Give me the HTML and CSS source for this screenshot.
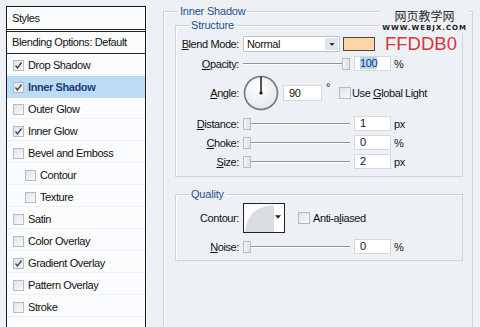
FILE: index.html
```html
<!DOCTYPE html>
<html lang="en">
<head>
    <meta charset="UTF-8">
    <title>Layer Style - Inner Shadow</title>
    <link rel="stylesheet" href="styles.css">
</head>
<body>
    <div class="dialog">
        <!-- left list of effects -->
        <aside class="styles-panel">
            <div class="panel-head">Styles</div>
            <div class="blend-opts">Blending Options: Default</div>
            <ul class="effect-list">
                <li class="effect"><span class="check on"><svg viewBox="0 0 9 9"><path d="M1.5 4.5 L3.5 7 L7.5 1.5"/></svg></span>Drop Shadow</li>
                <li class="effect active"><span class="check on"><svg viewBox="0 0 9 9"><path d="M1.5 4.5 L3.5 7 L7.5 1.5"/></svg></span>Inner Shadow</li>
                <li class="effect"><span class="check"></span>Outer Glow</li>
                <li class="effect"><span class="check on"><svg viewBox="0 0 9 9"><path d="M1.5 4.5 L3.5 7 L7.5 1.5"/></svg></span>Inner Glow</li>
                <li class="effect"><span class="check"></span>Bevel and Emboss</li>
                <li class="effect sub"><span class="check"></span>Contour</li>
                <li class="effect sub"><span class="check"></span>Texture</li>
                <li class="effect"><span class="check"></span>Satin</li>
                <li class="effect"><span class="check"></span>Color Overlay</li>
                <li class="effect"><span class="check on"><svg viewBox="0 0 9 9"><path d="M1.5 4.5 L3.5 7 L7.5 1.5"/></svg></span>Gradient Overlay</li>
                <li class="effect"><span class="check"></span>Pattern Overlay</li>
                <li class="effect"><span class="check"></span>Stroke</li>
            </ul>
        </aside>

        <!-- settings for the selected effect -->
        <main class="options">
            <fieldset class="box box-outer">
                <legend>Inner Shadow</legend>

                <fieldset class="box box-inner structure">
                    <legend>Structure</legend>

                    <div class="row row-blend">
                        <label class="lbl"><u>B</u>lend Mode:</label>
                        <div class="select">
                            <span class="select-text">Normal</span>
                            <span class="select-btn"><svg viewBox="0 0 7 4"><path d="M0 0 H7 L3.5 4 Z"/></svg></span>
                        </div>
                        <span class="swatch"></span>
                        <span class="hex-note">FFDDB0</span>
                    </div>

                    <div class="row">
                        <label class="lbl"><u>O</u>pacity:</label>
                        <div class="slider at-end"><span class="thumb"></span></div>
                        <span class="field"><span class="selected">100</span></span>
                        <span class="unit">%</span>
                    </div>

                    <div class="row row-angle">
                        <label class="lbl"><u>A</u>ngle:</label>
                        <svg class="dial" viewBox="0 0 36 36">
                            <defs>
                                <radialGradient id="dialFill" cx="0.4" cy="0.35" r="0.7">
                                    <stop offset="0" stop-color="#ffffff"/>
                                    <stop offset="1" stop-color="#e2e7ec"/>
                                </radialGradient>
                            </defs>
                            <circle cx="18" cy="18" r="16.5" fill="url(#dialFill)" stroke="#6f7882" stroke-width="1.6"/>
                            <line x1="18" y1="18" x2="18" y2="1.5" stroke="#111" stroke-width="1.4"/>
                            <circle cx="18" cy="18" r="1.6" fill="#111"/>
                        </svg>
                        <span class="field field-angle">90</span>
                        <span class="degree">°</span>
                        <span class="check check-light"></span>
                        <span class="opt-text">Use <u>G</u>lobal Light</span>
                    </div>

                    <div class="row row-num">
                        <label class="lbl"><u>D</u>istance:</label>
                        <div class="slider"><span class="thumb"></span></div>
                        <span class="field">1</span>
                        <span class="unit">px</span>
                    </div>

                    <div class="row row-num">
                        <label class="lbl"><u>C</u>hoke:</label>
                        <div class="slider"><span class="thumb"></span></div>
                        <span class="field">0</span>
                        <span class="unit">%</span>
                    </div>

                    <div class="row row-num">
                        <label class="lbl"><u>S</u>ize:</label>
                        <div class="slider"><span class="thumb"></span></div>
                        <span class="field">2</span>
                        <span class="unit">px</span>
                    </div>
                </fieldset>

                <fieldset class="box box-inner quality">
                    <legend>Quality</legend>

                    <div class="row row-contour">
                        <label class="lbl">Contour:</label>
                        <div class="contour">
                            <svg viewBox="0 0 40 28"><path d="M1 28 Q3 3 30 1 L30 28 Z" fill="#d9dde2"/></svg>
                            <svg class="contour-arrow" viewBox="0 0 7 4"><path d="M0 0 H7 L3.5 4 Z"/></svg>
                        </div>
                        <span class="check check-aa"></span>
                        <span class="opt-text">Anti-a<u>l</u>iased</span>
                    </div>

                    <div class="row row-noise">
                        <label class="lbl"><u>N</u>oise:</label>
                        <div class="slider"><span class="thumb"></span></div>
                        <span class="field">0</span>
                        <span class="unit">%</span>
                    </div>
                </fieldset>
            </fieldset>

            <!-- site watermark stamped over the screenshot -->
            <div class="watermark">
                <div class="wm-title">网页教学网</div>
                <div class="wm-url">WWW.WEBJX.COM</div>
            </div>
        </main>
    </div>
</body>
</html>
```

FILE: styles.css
```css
body {
    margin: 0;
    height: 327px;
    overflow: hidden;
    background: #edf1f5;
    font-family: "Liberation Sans", Arial, sans-serif;
    font-size: 11px;
    letter-spacing: -0.4px;
    color: #111;
}

.dialog {
    display: flex;
    height: 100%;
}

/* Styles list on the left */
.styles-panel {
    flex-shrink: 0;
    width: 138px;
    margin: 6px 0 0 6px;
    border: 1px solid #1b1b1b;
    border-bottom: none;
    background: #fafcfd;
}

.panel-head {
    height: 22px;
    line-height: 22px;
    padding-left: 5px;
    border-bottom: 3px double #222;
}

.blend-opts {
    height: 21px;
    line-height: 21px;
    padding-left: 5px;
    border-bottom: 1px solid #222;
}

.effect-list {
    list-style: none;
    margin: 0;
    padding: 0;
}

.effect {
    display: flex;
    align-items: center;
    height: 22px;
    padding-left: 6px;
    background: linear-gradient(to bottom, transparent 20px, #edf1f5 20px, #edf1f5 21px, transparent 21px);
}
.effect.sub {
    padding-left: 18px;
}
.effect.active {
    background: #bcdcf5;
    color: #1b3c78;
    font-weight: bold;
}

.check {
    flex-shrink: 0;
    display: inline-flex;
    width: 11px;
    height: 11px;
    box-sizing: border-box;
    margin-right: 4px;
    border: 1px solid #b3bbc3;
    background: linear-gradient(135deg, #dfe4e9, #f9fafb);
}
.check svg {
    width: 9px;
    height: 9px;
    fill: none;
    stroke: #35414d;
    stroke-width: 1.3;
}

/* Options on the right */
.options {
    position: relative;
    flex: 1;
    padding-left: 16px;
    border-left: 1px solid #fbfcfd;
}

.box {
    margin: 0;
    padding: 0;
    border: 1px solid #ccd3da;
    box-shadow: inset 1px 1px 0 #fff;
}
.box legend {
    margin-left: 13px;
    padding: 0 2px;
    line-height: 13px;
    font-size: 11px;
    letter-spacing: -0.2px;
    color: #1f4f8c;
}

.box-outer {
    width: 310px;
    box-sizing: border-box;
    height: 322px;
    margin-top: 5px;
    border-bottom: none;
}
.box-outer > legend {
    margin-left: 14px;
}

.box-inner {
    width: 288px;
    box-sizing: border-box;
    margin-left: 11px;
}
.structure {
    margin-top: 1px;
    padding: 4px 0 7px;
}
.quality {
    margin-top: 11px;
    padding: 1px 0 6px;
}

.row {
    display: flex;
    align-items: center;
    height: 15px;
}
.row-blend {
    height: 16px;
}
.row + .row {
    margin-top: 4px;
}
.structure .row:nth-child(3) {
    margin-top: 4px;
}
.row-angle {
    height: 34px;
}
.structure .row-angle {
    margin-top: 5px;
}
.structure .row-angle + .row {
    margin-top: 6px;
}
.row-contour {
    height: 30px;
}
.quality .row-contour {
    margin-top: 1px;
}
.quality .row-noise {
    margin-top: 6px;
}

.lbl {
    flex-shrink: 0;
    width: 63px;
    margin-right: 4px;
    text-align: right;
}

.select {
    display: flex;
    width: 97px;
    height: 16px;
    box-sizing: border-box;
    border: 1px solid #bcc4cc;
    background: #fff;
}
.select-text {
    flex: 1;
    padding-left: 3px;
    line-height: 14px;
}
.select-btn {
    display: flex;
    align-items: center;
    justify-content: center;
    width: 13px;
    margin: 1px;
    background: #dfe5ea;
}
.select-btn svg {
    width: 6px;
    height: 3px;
    fill: #333;
}

.swatch {
    width: 32px;
    height: 14px;
    box-sizing: border-box;
    margin-left: 3px;
    border: 1px solid #4a4a4a;
    background: #fdd7a6;
}

.hex-note {
    margin-left: 10px;
    font-size: 18.5px;
    line-height: 16px;
    letter-spacing: 0;
    color: #d9363a;
}

.slider {
    display: flex;
    align-items: center;
    width: 107px;
    height: 14px;
    background: linear-gradient(to bottom, transparent 6px, #8d969f 6px, #8d969f 7px, #fff 7px, #fff 8px, transparent 8px);
}
.slider.at-end {
    justify-content: flex-end;
}
.thumb {
    width: 8px;
    height: 12px;
    box-sizing: border-box;
    border: 1px solid #b5bdc5;
    background: linear-gradient(to right, #f4f6f8, #dde2e7);
}

.field {
    width: 37px;
    height: 15px;
    box-sizing: border-box;
    margin-left: 4px;
    padding-left: 5px;
    border: 1px solid #d3d9df;
    background: #fff;
    line-height: 13px;
}
.selected {
    background: #b7d4f1;
    color: #13377a;
}
.unit {
    margin-left: 3px;
}

.dial {
    width: 36px;
    height: 36px;
}
.field-angle {
    width: 39px;
    height: 16px;
    margin-left: 4px;
    line-height: 14px;
}
.degree {
    align-self: flex-start;
    margin: 7px 0 0 4px;
    font-size: 11px;
    line-height: 8px;
}
.check-light {
    width: 12px;
    height: 12px;
    margin-left: 9px;
    margin-right: 1px;
}
.opt-text {
    white-space: nowrap;
}

.contour {
    position: relative;
    width: 42px;
    height: 30px;
    box-sizing: border-box;
    border: 1px solid #222;
    background: #fff;
}
.contour svg {
    display: block;
    width: 40px;
    height: 28px;
}
.contour .contour-arrow {
    position: absolute;
    right: 3px;
    top: 11px;
    width: 6px;
    height: 4px;
    fill: #222;
}
.check-aa {
    width: 12px;
    height: 12px;
    margin-left: 13px;
    margin-right: 3px;
}

/* watermark over the top right corner */
.watermark {
    position: absolute;
    top: 8px;
    right: 11px;
    padding: 1px 2px;
    background: #edf1f5;
    text-align: center;
    letter-spacing: 0;
}
.wm-title {
    font-family: "Noto Sans CJK SC", sans-serif;
    font-size: 12px;
    line-height: 14px;
    color: #2a2a2a;
}
.wm-url {
    margin-top: 2px;
    font-family: "DejaVu Sans", sans-serif;
    font-size: 7px;
    font-weight: bold;
    line-height: 7px;
    letter-spacing: 1px;
    color: #222;
}
```
